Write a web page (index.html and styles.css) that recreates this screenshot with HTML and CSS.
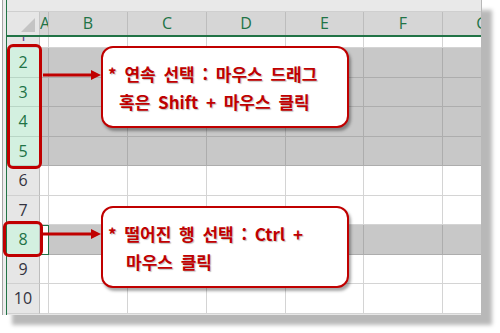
FILE: index.html
```html
<!DOCTYPE html>
<html lang="ko">
<head>
    <meta charset="UTF-8">
    <title>행 선택</title>
    <link rel="stylesheet" href="styles.css">
</head>
<body>
    <div class="stage">
        <div class="frame">
            <div class="sheet">
                <div class="topbar"></div>
                <div class="row head">
                    <div class="corner"><span class="tri"></span></div>
                    <div class="ch">A</div><div class="ch">B</div><div class="ch">C</div><div class="ch">D</div>
                    <div class="ch">E</div><div class="ch">F</div><div class="ch">G</div>
                </div>
                <div class="row r1">
                    <div class="rh"><span>1</span></div>
                    <div class="c"></div><div class="c"></div><div class="c"></div><div class="c"></div>
                    <div class="c"></div><div class="c"></div><div class="c"></div>
                </div>
                <div class="row sel">
                    <div class="rh">2</div>
                    <div class="c"></div><div class="c"></div><div class="c"></div><div class="c"></div>
                    <div class="c"></div><div class="c"></div><div class="c"></div>
                </div>
                <div class="row sel h29">
                    <div class="rh">3</div>
                    <div class="c"></div><div class="c"></div><div class="c"></div><div class="c"></div>
                    <div class="c"></div><div class="c"></div><div class="c"></div>
                </div>
                <div class="row sel">
                    <div class="rh">4</div>
                    <div class="c"></div><div class="c"></div><div class="c"></div><div class="c"></div>
                    <div class="c"></div><div class="c"></div><div class="c"></div>
                </div>
                <div class="row sel h29">
                    <div class="rh">5</div>
                    <div class="c"></div><div class="c"></div><div class="c"></div><div class="c"></div>
                    <div class="c"></div><div class="c"></div><div class="c"></div>
                </div>
                <div class="row">
                    <div class="rh">6</div>
                    <div class="c"></div><div class="c"></div><div class="c"></div><div class="c"></div>
                    <div class="c"></div><div class="c"></div><div class="c"></div>
                </div>
                <div class="row h29">
                    <div class="rh">7</div>
                    <div class="c"></div><div class="c"></div><div class="c"></div><div class="c"></div>
                    <div class="c"></div><div class="c"></div><div class="c"></div>
                </div>
                <div class="row sel">
                    <div class="rh">8</div>
                    <div class="c active"></div><div class="c"></div><div class="c"></div><div class="c"></div>
                    <div class="c"></div><div class="c"></div><div class="c"></div>
                </div>
                <div class="row h29">
                    <div class="rh">9</div>
                    <div class="c"></div><div class="c"></div><div class="c"></div><div class="c"></div>
                    <div class="c"></div><div class="c"></div><div class="c"></div>
                </div>
                <div class="row">
                    <div class="rh">10</div>
                    <div class="c"></div><div class="c"></div><div class="c"></div><div class="c"></div>
                    <div class="c"></div><div class="c"></div><div class="c"></div>
                </div>
            </div>
        </div>

        <!-- 표시 상자와 화살표 -->
        <div class="mark mark-range"></div>
        <div class="mark mark-one"></div>

        <svg class="arrow arrow-range" width="60" height="12" viewBox="0 0 60 12">
            <line x1="0" y1="6" x2="50" y2="6" stroke="#c00000" stroke-width="3"/>
            <polygon points="48,1 58,6 48,11" fill="#c00000"/>
        </svg>
        <svg class="arrow arrow-one" width="60" height="12" viewBox="0 0 60 12">
            <line x1="0" y1="6" x2="50" y2="6" stroke="#c00000" stroke-width="3"/>
            <polygon points="48,1 58,6 48,11" fill="#c00000"/>
        </svg>

        <div class="callout callout-range">
            <p>* 연속 선택 : 마우스 드래그</p>
            <p class="indent">혹은 Shift + 마우스 클릭</p>
        </div>
        <div class="callout callout-one">
            <p>* 떨어진 행 선택 : Ctrl +</p>
            <p class="indent-lg">마우스 클릭</p>
        </div>
    </div>
</body>
</html>
```

FILE: styles.css
```css
body {
    margin: 0;
    background: #ffffff;
    font-family: "Open Sans", "Noto Sans", sans-serif;
}

.stage {
    position: relative;
    width: 500px;
    height: 333px;
    overflow: hidden;
}

.frame {
    margin-left: 2px;
    width: 480px;
    height: 315px;
    border-left: 1px solid #a6a6a6;
    border-right: 1px solid #b8b8b8;
    box-sizing: border-box;
    padding-left: 3px;
    background: #ececec;
    overflow: hidden;
    box-shadow: 10px 10px 4px rgba(0, 0, 0, 0.28);
}

.sheet {
    height: 100%;
    border-left: 1px solid #217346;
    background: #e6e6e6;
}

.topbar {
    height: 12px;
    background: #e9e9e9;
    border-bottom: 1px solid #cfcfcf;
    box-sizing: border-box;
}

.row {
    display: grid;
    grid-template-columns: 33px 9px 79px 79px 79px 78px 79px 79px;
    height: 30px;
}

.row.h29 {
    height: 29px;
}

.row.head {
    height: 23px;
    border-bottom: 2px solid #217346;
}

.row.r1 {
    height: 11px;
}

.corner {
    position: relative;
    background: #e6e6e6;
    border-right: 1px solid #c6c6c6;
}

.tri {
    position: absolute;
    right: 4px;
    bottom: 3px;
    width: 0;
    height: 0;
    border-left: 14px solid transparent;
    border-bottom: 14px solid #c4c4c4;
}

.ch {
    background: #d6d6d6;
    border-right: 1px solid #bdbdbd;
    color: #217346;
    font-size: 16px;
    line-height: 22px;
    text-align: center;
    overflow: hidden;
}

.ch:first-of-type {
    text-align: left;
}

.rh {
    background: #e6e6e6;
    border-right: 1px solid #bdbdbd;
    border-bottom: 1px solid #d0d0d0;
    color: #333340;
    font-size: 16px;
    line-height: 29px;
    text-align: center;
    box-sizing: border-box;
    overflow: hidden;
}

.r1 .rh span {
    display: block;
    line-height: 14px;
    margin-top: -9px;
    color: #5a3f8a;
}

.c {
    background: #ffffff;
    border-right: 1px solid #d4d4d4;
    border-bottom: 1px solid #d4d4d4;
    box-sizing: border-box;
}

.sel .rh {
    background: #d3f0e0;
    color: #217346;
    border-bottom-color: #b9d6c6;
}

.sel .c {
    background: #c8c8c8;
    border-right-color: #adadad;
    border-bottom-color: #adadad;
}

.sel .c.active {
    background: #ffffff;
    border: 1px solid #217346;
    border-left-width: 2px;
}

.mark {
    position: absolute;
    border: 3px solid #c00000;
    border-radius: 6px;
    box-sizing: border-box;
}

.mark-range {
    left: 7px;
    top: 44px;
    width: 35px;
    height: 125px;
}

.mark-one {
    left: 3px;
    top: 221px;
    width: 40px;
    height: 36px;
}

.arrow {
    position: absolute;
    left: 43px;
}

.arrow-range {
    top: 69px;
}

.arrow-one {
    top: 228px;
}

.callout {
    position: absolute;
    left: 101px;
    width: 248px;
    height: 82px;
    box-sizing: border-box;
    padding: 12px 0 0 5px;
    background: #ffffff;
    border: 2px solid #c00000;
    border-radius: 12px;
    box-shadow: 2px 3px 3px rgba(0, 0, 0, 0.35);
    color: #c00000;
    font-family: "Noto Sans CJK KR", "Noto Sans", sans-serif;
    font-weight: bold;
    font-size: 17px;
    line-height: 28px;
    word-spacing: 3px;
    text-shadow: 1px 1px 1px rgba(0, 0, 0, 0.25);
}

.callout p {
    margin: 0;
    white-space: nowrap;
}

.callout .indent {
    padding-left: 11px;
}

.callout .indent-lg {
    padding-left: 18px;
}

.callout-range {
    top: 46px;
}

.callout-one {
    top: 206px;
}
```
